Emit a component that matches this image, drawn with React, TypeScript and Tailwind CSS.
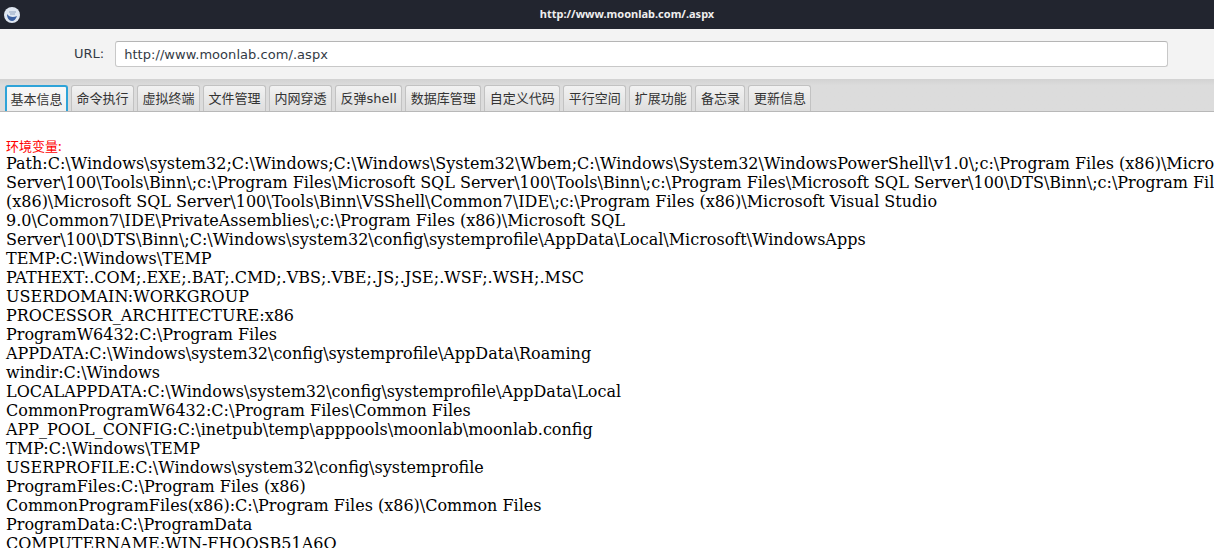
const tabs = [
  "基本信息",
  "命令执行",
  "虚拟终端",
  "文件管理",
  "内网穿透",
  "反弹shell",
  "数据库管理",
  "自定义代码",
  "平行空间",
  "扩展功能",
  "备忘录",
  "更新信息",
]

const envLines = [
  "Path:C:\\Windows\\system32;C:\\Windows;C:\\Windows\\System32\\Wbem;C:\\Windows\\System32\\WindowsPowerShell\\v1.0\\;c:\\Program Files (x86)\\Microsoft SQL",
  "Server\\100\\Tools\\Binn\\;c:\\Program Files\\Microsoft SQL Server\\100\\Tools\\Binn\\;c:\\Program Files\\Microsoft SQL Server\\100\\DTS\\Binn\\;c:\\Program Files",
  "(x86)\\Microsoft SQL Server\\100\\Tools\\Binn\\VSShell\\Common7\\IDE\\;c:\\Program Files (x86)\\Microsoft Visual Studio",
  "9.0\\Common7\\IDE\\PrivateAssemblies\\;c:\\Program Files (x86)\\Microsoft SQL",
  "Server\\100\\DTS\\Binn\\;C:\\Windows\\system32\\config\\systemprofile\\AppData\\Local\\Microsoft\\WindowsApps",
  "TEMP:C:\\Windows\\TEMP",
  "PATHEXT:.COM;.EXE;.BAT;.CMD;.VBS;.VBE;.JS;.JSE;.WSF;.WSH;.MSC",
  "USERDOMAIN:WORKGROUP",
  "PROCESSOR_ARCHITECTURE:x86",
  "ProgramW6432:C:\\Program Files",
  "APPDATA:C:\\Windows\\system32\\config\\systemprofile\\AppData\\Roaming",
  "windir:C:\\Windows",
  "LOCALAPPDATA:C:\\Windows\\system32\\config\\systemprofile\\AppData\\Local",
  "CommonProgramW6432:C:\\Program Files\\Common Files",
  "APP_POOL_CONFIG:C:\\inetpub\\temp\\apppools\\moonlab\\moonlab.config",
  "TMP:C:\\Windows\\TEMP",
  "USERPROFILE:C:\\Windows\\system32\\config\\systemprofile",
  "ProgramFiles:C:\\Program Files (x86)",
  "CommonProgramFiles(x86):C:\\Program Files (x86)\\Common Files",
  "ProgramData:C:\\ProgramData",
  "COMPUTERNAME:WIN-FHQOSB51A6Q",
]

function AppIcon() {
  return (
    <svg width="16" height="16" viewBox="0 0 16 16" className="ml-1 shrink-0">
      <circle cx="8" cy="8" r="8" fill="#dfe7f1" />
      <path d="M3 7c2 3 6 4 10 2-1 3-3 5-5 5-3 0-5-3-5-7z" fill="#3a5f9f" />
      <path d="M5 5h7M6 7h5" stroke="#8fa3bf" strokeWidth="1" />
    </svg>
  )
}

export default function App() {
  return (
    <div className="w-[1214px] h-[548px] overflow-hidden flex flex-col bg-white font-['Liberation_Sans','Noto_Sans_CJK_SC',sans-serif]">
      {/* Title bar */}
      <div className="relative h-[29px] shrink-0 flex items-center bg-[#22252f]">
        <AppIcon />
        <div className="absolute inset-0 flex items-center justify-center pl-[40px] text-[11px] font-bold text-[#eeeeee] font-['Noto_Sans',sans-serif]">
          http://www.moonlab.com/.aspx
        </div>
      </div>

      {/* URL bar */}
      <div className="h-[50px] shrink-0 flex items-center bg-[#f3f3f3] pl-[74px] pr-[46px] gap-[11px]">
        <span className="text-[13px] text-[#333a45] font-['DejaVu_Sans',sans-serif]">URL:</span>
        <input
          readOnly
          value="http://www.moonlab.com/.aspx"
          className="flex-1 h-[26px] px-[8px] bg-white border border-[#c8c8c8] border-t-[#b5b5b5] rounded-[3px] text-[13px] tracking-[0.05px] text-[#333a45] outline-none font-['DejaVu_Sans',sans-serif]"
        />
      </div>

      {/* Tabs */}
      <div className="h-[33px] shrink-0 flex items-end gap-[3px] pl-[5px] bg-gradient-to-b from-[#d2d2d2] to-[#dcdcdc] to-[20%] border-b border-[#b8b8b8]">
        {tabs.map((tab, i) => (
          <div
            key={tab}
            className={
              i === 0
                ? "h-[26px] px-[3.5px] pt-[1px] flex items-center rounded-t-[3px] border-2 border-b-0 border-[#2ea3d8] bg-gradient-to-b from-[#f8f8f8] to-[#f0f0f0] text-[13px] text-[#333] whitespace-nowrap font-['DejaVu_Sans','Noto_Sans_CJK_SC',sans-serif]"
                : "h-[26px] px-[4.5px] pt-[1px] flex items-center rounded-t-[3px] border border-b-0 border-[#c2c2c2] bg-gradient-to-b from-[#f2f2f2] to-[#dedede] text-[13px] text-[#333] whitespace-nowrap font-['DejaVu_Sans','Noto_Sans_CJK_SC',sans-serif]"
            }
          >
            {tab}
          </div>
        ))}
      </div>

      {/* Output */}
      <div className="flex-1 overflow-hidden pl-[6px] pt-[26px] text-black whitespace-nowrap">
        <div className="text-[13px] leading-[16px] text-[#ff0000] font-['Noto_Sans_CJK_SC',sans-serif]">环境变量:</div>
        <div className="text-[16px] leading-[19px] font-['DejaVu_Serif',serif]">
          {envLines.map((line) => (
            <div key={line}>{line}</div>
          ))}
        </div>
      </div>
    </div>
  )
}
